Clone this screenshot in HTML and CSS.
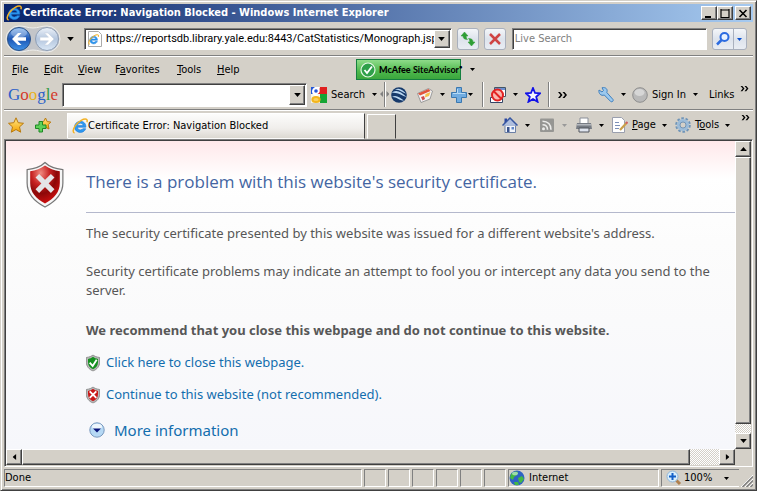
FILE: index.html
```html
<!DOCTYPE html>
<html lang="en">
<head>
  <meta charset="UTF-8">
  <meta name="viewport" content="width=device-width, initial-scale=1.0">
  <title>Certificate Error: Navigation Blocked</title>
  <link rel="stylesheet" href="styles.css">
</head>
<body>
  <!-- shared icons -->
  <svg class="defs" aria-hidden="true">
    <defs>
      <linearGradient id="gBlue" x1="0" y1="0" x2="0" y2="1">
        <stop offset="0" stop-color="#7fb2ee"/><stop offset=".5" stop-color="#1d56b4"/><stop offset="1" stop-color="#3f93e8"/>
      </linearGradient>
      <linearGradient id="gPale" x1="0" y1="0" x2="0" y2="1">
        <stop offset="0" stop-color="#eef3fa"/><stop offset=".5" stop-color="#b4c6de"/><stop offset="1" stop-color="#dbe8f6"/>
      </linearGradient>
      <radialGradient id="gRed" cx=".35" cy=".2" r=".9">
        <stop offset="0" stop-color="#f08a80"/><stop offset=".35" stop-color="#c62020"/><stop offset=".6" stop-color="#8c0808"/><stop offset="1" stop-color="#e01010"/>
      </radialGradient>
      <linearGradient id="gStar" x1="0" y1="0" x2="0" y2="1">
        <stop offset="0" stop-color="#ffe88a"/><stop offset="1" stop-color="#f5a300"/>
      </linearGradient>
      <symbol id="ie" viewBox="0 0 16 16">
        <path d="M13.8 9.2H5.4c.2 1.800 1.400 2.700 3 2.700 1.200 0 2-.4 2.600-1.200h2.700c-.8 2.300-2.700 3.700-5.300 3.700-3.400 0-5.800-2.300-5.800-5.500s2.500-5.600 5.800-5.600c3.500 0 5.700 2.500 5.400 5.900zM5.500 7.400h5.600C10.900 6 9.900 5.200 8.400 5.200S5.800 6 5.500 7.400z" fill="#2f9af0" stroke="#1574d6" stroke-width=".6"/>
        <path d="M2.600 15C.6 14.600.6 11.400 3.400 7.600 6.600 3.200 12 .2 14.400 1.300c1 .5 1 1.600.5 2.900" fill="none" stroke="#f3b226" stroke-width="1.500"/>
      </symbol>
      <symbol id="down" viewBox="0 0 5 3"><path d="M0 0h5L2.500 3z" fill="currentColor"/></symbol>
      <symbol id="shield" viewBox="0 0 38 46">
        <path d="M19 1c3 3 9 6 18 7v13c0 11-7 19-18 24C8 40 1 32 1 21V8C10 7 16 4 19 1z" fill="#b9b9b9" stroke="#777" stroke-width="2"/>
        <path d="M19 6c4 3 8 5 13.500 6v9c0 9-5 15-13.500 19C10.500 36 5.500 30 5.500 21V12C11 11 15 9 19 6z" fill="currentColor"/>
      </symbol>
      <symbol id="more" viewBox="0 0 9 8"><path d="M0 1h2l2.500 3L2 7H0l2.500-3zM4.500 1h2L9 4 6.500 7h-2L7 4z" fill="currentColor"/></symbol>
    </defs>
  </svg>

  <div class="window">
    <header class="titlebar">
      <svg class="icon"><use href="#ie"/></svg>
      <h1>Certificate Error: Navigation Blocked - Windows Internet Explorer</h1>
      <button type="button" class="caption" aria-label="Minimize"><svg width="10" height="9"><path d="M1 8h6" stroke="#000" stroke-width="2"/></svg></button>
      <button type="button" class="caption" aria-label="Maximize"><svg width="10" height="9"><path d="M.5 1h9M1 0v9M9 0v9M.5 8.500h9" stroke="#000" stroke-width="1.200" fill="none"/></svg></button>
      <button type="button" class="caption close" aria-label="Close"><svg width="10" height="9"><path d="M1.500 1l7 7M8.500 1l-7 7" stroke="#000" stroke-width="1.600"/></svg></button>
    </header>

    <nav class="navbar">
      <button type="button" class="travel" aria-label="Back and forward">
        <svg width="56" height="28">
          <path d="M14 1c6 0 9 2 14 2s8-2 14-2a13 13 0 0 1 0 26c-6 0-9-2-14-2s-8 2-14 2a13 13 0 0 1 0-26z" fill="#c3c5c9" stroke="#eeeeec"/>
          <circle cx="14" cy="14" r="11.500" fill="url(#gBlue)" stroke="#2b5288"/>
          <ellipse cx="14" cy="8" rx="8" ry="4.500" fill="#fff" opacity=".3"/>
          <path d="M7 14l6-6h3.500l-4 4.200H21v3.600h-8.500l4 4.200H13z" fill="#fff"/>
          <circle cx="42" cy="14" r="11.500" fill="url(#gPale)" stroke="#8d9db4"/>
          <path d="M49 14l-6-6h-3.500l4 4.200H35v3.600h8.500l-4 4.200H43z" fill="#fff" stroke="#c5cfdd" stroke-width=".5"/>
        </svg>
      </button>
      <button type="button" class="flat history" aria-label="Recent pages"><svg class="arrow big"><use href="#down"/></svg></button>
      <div class="field address">
        <svg class="icon" viewBox="0 0 16 16"><path d="M1.500.5h10l3 3v12h-13z" fill="#fff" stroke="#aaa"/><use href="#ie" x="1" y="3" width="11" height="11"/></svg>
        <input type="text" aria-label="Address" value="https://reportsdb.library.yale.edu:8443/CatStatistics/Monograph.jsp">
        <button type="button" class="drop" aria-label="Show addresses"><svg class="arrow big"><use href="#down"/></svg></button>
      </div>
      <button type="button" class="glass" aria-label="Refresh">
        <svg class="icon" viewBox="0 0 16 16"><path d="M1 5l3.500-4L8 5H6.200c0 1.500.3 2.500 1.300 3.500C4.500 8.500 3 7.500 3 5zM15 11l-3.500 4L8 11h1.800c0-1.500-.3-2.500-1.300-3.500 3 0 4.500 1 4.500 3.500z" fill="#2f9e35" stroke="#2f9e35" stroke-width=".5"/></svg>
      </button>
      <button type="button" class="glass" aria-label="Stop">
        <svg class="icon" viewBox="0 0 16 16"><path d="M3 3l10 10M13 3L3 13" stroke="#cf4444" stroke-width="2.500"/></svg>
      </button>
      <div class="field live"><input type="search" aria-label="Live Search" placeholder="Live Search"></div>
      <div class="glass split">
        <button type="button" aria-label="Search"><svg class="icon" viewBox="0 0 16 16"><circle cx="9.500" cy="6" r="4" fill="#e8f2ff" stroke="#2b6be0" stroke-width="2"/><path d="M6.500 9L2 13.500" stroke="#2b6be0" stroke-width="2.500"/></svg></button>
        <button type="button" aria-label="Search options"><svg class="arrow blue"><use href="#down"/></svg></button>
      </div>
    </nav>

    <div class="menubar">
      <nav class="menu">
        <a href="#"><u>F</u>ile</a>
        <a href="#"><u>E</u>dit</a>
        <a href="#"><u>V</u>iew</a>
        <a href="#">F<u>a</u>vorites</a>
        <a href="#"><u>T</u>ools</a>
        <a href="#"><u>H</u>elp</a>
      </nav>
      <button type="button" class="advisor">
        <svg class="icon" viewBox="0 0 16 16"><circle cx="8" cy="8" r="7" fill="#2fa04a" stroke="#e6f7e6" stroke-width="1.200"/><path d="M4.500 8l2.500 3 5-6.500" fill="none" stroke="#fff" stroke-width="1.800"/></svg>
        <span><b>McAfee</b> SiteAdvisor<sup>•</sup></span>
      </button>
      <button type="button" class="flat" aria-label="SiteAdvisor menu"><svg class="arrow"><use href="#down"/></svg></button>
    </div>

    <div class="googlebar">
      <div class="logo" aria-label="Google"><span class="g-blue">G</span><span class="g-red">o</span><span class="g-yellow">o</span><span class="g-blue">g</span><span class="g-green">l</span><span class="g-red">e</span></div>
      <div class="field combo">
        <input type="text" aria-label="Google search">
        <button type="button" class="drop" aria-label="Search history"><svg class="arrow big"><use href="#down"/></svg></button>
      </div>
      <button type="button" class="tool">
        <svg class="icon" viewBox="0 0 16 16"><path d="M0 0h7v7H0z" fill="#2355d8"/><path d="M7 0h9v7H7z" fill="#e02020"/><path d="M9 7h7v9H9z" fill="#15a535"/><path d="M0 7h9v9H0z" fill="#f5f5e8"/><path d="M4 0h5L8.500 2c1 3-1 5-3 5.500l3.500 2.500-5-1C0 7 0 2 4 0z" fill="#fff"/><circle cx="5" cy="4" r="1.800" fill="#2355d8"/><ellipse cx="5" cy="12.500" rx="3.600" ry="2.500" fill="#f8d060" stroke="#f3b51b" stroke-width="2"/></svg>
        Search<svg class="arrow"><use href="#down"/></svg>
      </button>
      <svg class="grip" viewBox="0 0 9 25"><path d="M4.500 0v25" stroke="#808080"/><path d="M5.500 0v25" stroke="#fff"/><path d="M3 9v6L0 12zM6.500 9v6l3-3z" fill="#808080"/></svg>
      <button type="button" class="tool" aria-label="Earth">
        <svg class="icon" viewBox="0 0 16 16"><circle cx="8" cy="8" r="7.800" fill="#173a6b"/><path d="M.5 6c4-4 9-2 15 4-4-1-9-5-15-4zM1 10c4-3 8 1 12 3.500-5 0-8-4-12-3.500zM4 2.500c5-2 8 1 11 4-4-1-6-4-11-4z" fill="#bcd9f2"/></svg>
      </button>
      <button type="button" class="tool" aria-label="News">
        <svg class="icon" viewBox="0 0 16 16"><path d="M.5 6.500l11-5L15.500 4l-2.500 8-9 3.500z" fill="#f4f5f8" stroke="#8a8a8a" stroke-width=".8"/><path d="M1 6.500l10.500-4.500 2 2L3 8.500z" fill="#e2533c"/><path d="M8.500 7l5-2-1.500 4-4 1.500z" fill="#f6c04e"/><path d="M4 10l3-1 1 3-2.500 1.500z" fill="#d04a4a"/></svg>
        <svg class="arrow"><use href="#down"/></svg>
      </button>
      <button type="button" class="tool tight" aria-label="Add">
        <svg class="icon" viewBox="0 0 16 16"><path d="M5.500.5h5v5h5v5h-5v5h-5v-5h-5v-5h5z" fill="#71ace0" stroke="#3b78b0"/><path d="M6.500 2v4.500H2M7 6.500h7" fill="none" stroke="#b7dbf6"/></svg>
        <svg class="arrow"><use href="#down"/></svg>
      </button>
      <i class="divider"></i>
      <button type="button" class="tool" aria-label="Pop-up blocker">
        <svg class="icon" viewBox="0 0 16 16"><path d="M4.500.5h11v9h-11z" fill="#fff" stroke="#456"/><path d="M5 1h10v2H5z" fill="#6d8fd0"/><path d="M.5 10.500h12v5H.5z" fill="#fff" stroke="#346"/><circle cx="7.500" cy="8" r="5.500" fill="#f8b8b0" stroke="#e32222" stroke-width="2"/><path d="M4 4.500l7 7" stroke="#e32222" stroke-width="2"/></svg>
        <svg class="arrow"><use href="#down"/></svg>
      </button>
      <button type="button" class="tool" aria-label="Bookmark">
        <svg class="icon" viewBox="0 0 16 16"><path d="M8 1l2 5 5.200.3-4 3.400 1.400 5.100L8 12l-4.600 2.800 1.400-5.100-4-3.400L6 6z" fill="#f5f5ff" stroke="#1212e8" stroke-width="1.800"/></svg>
      </button>
      <i class="divider"></i>
      <button type="button" class="flat" aria-label="More Google tools"><svg class="chevron"><use href="#more"/></svg></button>
      <span></span>
      <button type="button" class="tool" aria-label="Google settings">
        <svg class="icon" viewBox="0 0 16 16"><path d="M1 3l3 2 1.500-1.500L4 .8C8-.2 10 2.500 8.800 5.500l6.200 7c.8 1.500-1 3-2.300 2L6.300 8C3 9.300.3 6.500 1 3z" fill="#9cc9ee" stroke="#3f7fbd"/></svg>
        <svg class="arrow"><use href="#down"/></svg>
      </button>
      <button type="button" class="tool">
        <svg class="icon" viewBox="0 0 16 16"><circle cx="8" cy="8" r="7.300" fill="#b9b9b9" stroke="#8e8e8e"/><ellipse cx="7.500" cy="5.500" rx="5" ry="3.500" fill="#d6d6d6"/></svg>
        Sign In<svg class="arrow"><use href="#down"/></svg>
      </button>
      <button type="button" class="tool links">Links</button>
      <button type="button" class="flat top" aria-label="More links"><svg class="chevron small"><use href="#more"/></svg></button>
    </div>

    <div class="tabbar">
      <button type="button" class="tool" aria-label="Favorites">
        <svg class="icon" viewBox="0 0 16 16"><path d="M8 .8l2.200 4.900 5.300.6-4 3.600 1.200 5.300L8 12.500l-4.700 2.700 1.200-5.300-4-3.600 5.300-.6z" fill="url(#gStar)" stroke="#b97a10"/></svg>
      </button>
      <button type="button" class="tool" aria-label="Add to favorites">
        <svg class="icon" viewBox="0 0 16 16"><path d="M10.500 1l1.700 3.600 3.600.4-2.600 2.700.8 4.300-3.500-1.800L7 12l.5-4-2.700-3 3.800-.4z" fill="url(#gStar)" stroke="#b97a10"/><path d="M4 4.500h3.500V8H11v3.500H7.500V15H4v-3.500H.5V8H4z" fill="#5fd05a" stroke="#1d8a25"/></svg>
      </button>
      <a href="#" class="tab"><svg class="icon"><use href="#ie"/></svg>Certificate Error: Navigation Blocked</a>
      <button type="button" class="newtab" aria-label="New tab"></button>
      <span></span>
      <button type="button" class="tool" aria-label="Home">
        <svg class="icon" viewBox="0 0 16 16"><path d="M3 8h10.500v7.500H3z" fill="#f1f4fa" stroke="#6b7fa5"/><path d="M2.500 1.500h2.500v5H2.500z" fill="#2a45a0"/><path d="M.5 8.500L8 1l7.500 7.500" fill="#aebede" stroke="#3656a0" stroke-width="1.500"/><path d="M5 10h2.500v5H5z" fill="#39538d"/><path d="M9.500 10h2.500v2.500H9.500z" fill="#5f86c8"/></svg>
        <svg class="arrow"><use href="#down"/></svg>
      </button>
      <button type="button" class="tool muted" aria-label="Feeds">
        <svg class="icon" viewBox="0 0 16 16"><rect x="1" y="1.500" width="14" height="13.500" rx="1" fill="#969693"/><circle cx="4.500" cy="11.800" r="1.500" fill="#ececea"/><path d="M3.500 7.800c3 0 5 2 5 5M3.500 4.300c5.500 0 8.500 3.500 8.500 8.500" fill="none" stroke="#ececea" stroke-width="1.600"/></svg>
        <svg class="arrow"><use href="#down"/></svg>
      </button>
      <button type="button" class="tool" aria-label="Print">
        <svg class="icon" viewBox="0 0 16 16"><path d="M4 1h8v6H4z" fill="#fff" stroke="#8a8f99"/><path d="M1 6h14l1 6H0z" fill="#777c84"/><path d="M1 7h14v1.500H1z" fill="#b2b6bc"/><path d="M3 11h10v4H3z" fill="#dfe4ee" stroke="#50545c"/></svg>
        <svg class="arrow"><use href="#down"/></svg>
      </button>
      <button type="button" class="tool">
        <svg class="icon" viewBox="0 0 16 16"><path d="M.5.5h9l3 3v12H.5z" fill="#fff" stroke="#9a9fae"/><path d="M3 5.500h4M3 8.500h5M3 11.500h4" stroke="#7b8fb7"/><path d="M14.500 6L8 13" stroke="#caa04a" stroke-width="2.200"/><path d="M15.500 5l-1.500 1.500" stroke="#d25d5d" stroke-width="2.200"/></svg>
        <span><u>P</u>age</span><svg class="arrow"><use href="#down"/></svg>
      </button>
      <button type="button" class="tool">
        <svg class="icon" viewBox="0 0 16 16"><circle cx="8" cy="8" r="6.800" fill="none" stroke="#6f94b8" stroke-width="2" stroke-dasharray="2.600 1.700"/><circle cx="8" cy="8" r="4.500" fill="#d4d0c8" stroke="#9cbcd9" stroke-width="3"/><circle cx="8" cy="8" r="3" fill="none" stroke="#6489ad" stroke-width=".8"/></svg>
        <span>T<u>o</u>ols</span><svg class="arrow"><use href="#down"/></svg>
      </button>
      <button type="button" class="flat top" aria-label="More commands"><svg class="chevron small"><use href="#more"/></svg></button>
    </div>

    <div class="viewport">
      <main class="page">
        <svg class="badge" viewBox="0 0 38 46">
          <path d="M19 1.500c3 3 9 6 17.500 7v13c0 11-7 18-17.500 23.500C8.500 39.500 1.500 32.500 1.500 21.500v-13C10 7.500 16 4.500 19 1.500z" fill="#f6f6f6" stroke="#777" stroke-width="1.200"/>
          <path d="M19 4.500c4 3 9 5 14.500 5.500v11.500c0 9-5.500 15-14.500 20-9-5-14.500-11-14.500-20V10C10 9.500 15 7.500 19 4.500z" fill="url(#gRed)"/>
          <path d="M11.500 14.500l15 15M26.500 14.500l-15 15" stroke="#e4e4e6" stroke-width="5"/>
        </svg>
        <article>
          <h2>There is a problem with this website's security certificate.</h2>
          <p>The security certificate presented by this website was issued for a different website's address.</p>
          <p>Security certificate problems may indicate an attempt to fool you or intercept any data you send to the server.</p>
          <p class="advice"><b>We recommend that you close this webpage and do not continue to this website.</b></p>
          <ul>
            <li>
              <svg class="mini ok" viewBox="0 0 38 46"><use href="#shield"/><path d="M10 22l8 9 11-17" fill="none" stroke="#fff" stroke-width="5"/></svg>
              <a href="#">Click here to close this webpage.</a>
            </li>
            <li>
              <svg class="mini bad" viewBox="0 0 38 46"><use href="#shield"/><path d="M10 13l18 18M28 13L10 31" stroke="#fff" stroke-width="5"/></svg>
              <a href="#">Continue to this website (not recommended).</a>
            </li>
            <li class="info">
              <svg class="icon" viewBox="0 0 16 16"><circle cx="8" cy="8" r="7.200" fill="#b5d8f4" stroke="#7797bd"/><ellipse cx="8" cy="4.500" rx="5" ry="2.800" fill="#eef7fd"/><path d="M4 6.500h8L8 10.500z" fill="#08147a"/></svg>
              <a href="#">More information</a>
            </li>
          </ul>
        </article>
      </main>
      <div class="scroll vertical">
        <button type="button" aria-label="Scroll up"><svg class="arrow big up"><use href="#down"/></svg></button>
        <i class="thumb"></i>
        <button type="button" aria-label="Scroll down"><svg class="arrow big"><use href="#down"/></svg></button>
      </div>
      <div class="scroll horizontal">
        <button type="button" aria-label="Scroll left"><svg class="arrow big left"><use href="#down"/></svg></button>
        <i class="thumb"></i>
        <button type="button" aria-label="Scroll right"><svg class="arrow big right"><use href="#down"/></svg></button>
      </div>
    </div>

    <footer class="status">
      <span>Done</span>
      <span></span><span></span><span></span><span></span><span></span><span></span>
      <span class="zone">
        <svg class="icon" viewBox="0 0 16 16"><circle cx="8" cy="8" r="7.500" fill="#2e62c4"/><path d="M2 4c3-3 6-3 7-2L8 5 5 7 4 10 1 8zM9 8l4-2 2 3-3 4-2-1zM5 12l4 0 1 3-4 0z" fill="#44b944"/><ellipse cx="6" cy="3.500" rx="3" ry="1.800" fill="#c5ecd6" opacity=".7"/></svg>
        Internet
      </span>
      <button type="button" class="zoom">
        <svg class="icon" viewBox="0 0 16 16"><path d="M9.500 9.500l4.500 4.500" stroke="#b0804f" stroke-width="3"/><circle cx="6.500" cy="6.500" r="5.500" fill="#d9eefc" stroke="#8fb5d8"/><path d="M6.500 3v7M3 6.500h7" stroke="#1560c8" stroke-width="2"/></svg>
        100%<svg class="arrow"><use href="#down"/></svg>
      </button>
      <svg class="resize" viewBox="0 0 12 12"><path d="M0 12L12 0M4 12l8-8M8 12l4-4" stroke="#fff"/><path d="M1.500 12L12 1.500M5.500 12L12 5.500M9.500 12L12 9.500" stroke="#808080" stroke-width="1.500"/></svg>
    </footer>
  </div>
</body>
</html>
```
FILE: styles.css
```css
* {
  box-sizing: border-box;
}
body {
  margin: 0;
  background: #d4d0c8;
  color: #000;
  font: 11px/14px "DejaVu Sans Condensed", Tahoma, sans-serif;
}
button, input {
  font: inherit;
  color: inherit;
  margin: 0;
  padding: 0;
  border: 0;
  background: none;
  min-width: 0;
}
input {
  width: 100%;
  outline: 0;
}
button {
  display: flex;
  align-items: center;
  white-space: nowrap;
}
a {
  color: inherit;
  text-decoration: none;
}
svg {
  display: block;
  flex: none;
}
.defs {
  position: absolute;
  width: 0;
  height: 0;
}
.icon {
  width: 16px;
  height: 16px;
}
.arrow {
  width: 5px;
  height: 3px;
}
.arrow.big {
  width: 7px;
  height: 4px;
}
.arrow.blue {
  color: #0a50d0;
}
.arrow.up {
  transform: rotate(180deg);
}
.arrow.left {
  transform: rotate(90deg);
}
.arrow.right {
  transform: rotate(-90deg);
}
.chevron {
  width: 11px;
  height: 8px;
}
.chevron.small {
  width: 9px;
  height: 7px;
}
.flat {
  justify-content: center;
}

/* window frame */
.window {
  display: flex;
  flex-direction: column;
  min-height: 100vh;
  padding: 3px;
  border: 1px solid;
  border-color: #d4d0c8 #404040 #404040 #d4d0c8;
  box-shadow: inset 1px 1px #fff, inset -1px -1px #808080;
}
.titlebar {
  display: flex;
  align-items: center;
  height: 18px;
  padding: 0 2px;
  background: linear-gradient(to right, #0a246a, #a6caf0);
  color: #fff;
}
.titlebar h1 {
  flex: 1;
  margin: 0 0 0 1px;
  font-size: 11px;
  white-space: nowrap;
}
.caption, .drop, .scroll button, .thumb {
  background: #d4d0c8;
  border: 1px solid;
  border-color: #fff #404040 #404040 #fff;
  box-shadow: inset -1px -1px #808080;
}
.caption {
  width: 16px;
  height: 14px;
  justify-content: center;
}
.caption.close {
  margin-left: 2px;
}

/* address row */
.navbar {
  display: flex;
  align-items: center;
  height: 35px;
  padding: 0 6px 0 1px;
  border-bottom: 1px solid #fff;
  box-shadow: inset 0 -1px #808080;
}
.history {
  width: 16px;
  margin: 0 6px 0 1px;
}
.field {
  display: flex;
  align-items: center;
  height: 22px;
  padding: 1px;
  background: #fff;
  border: 1px solid;
  border-color: #808080 #fff #fff #808080;
  box-shadow: inset 1px 1px #404040;
}
.address {
  flex: 370;
  padding-left: 2px;
}
.address input {
  margin-left: 3px;
  font-family: Roboto, sans-serif;
}
.drop {
  flex: none;
  width: 16px;
  height: 18px;
  justify-content: center;
}
.glass {
  width: 22px;
  height: 22px;
  margin-left: 5px;
  justify-content: center;
  background: linear-gradient(#f4f6f9, #dde3ec 50%, #e9edf3);
  border: 1px solid #a9b0bd;
  border-radius: 3px;
}
.live {
  flex: 194;
  margin-left: 6px;
  padding-left: 2px;
}
.live input::placeholder {
  color: #808080;
  opacity: 1;
}
.split {
  display: flex;
  width: 35px;
}
.split button {
  width: 21px;
  height: 20px;
  justify-content: center;
}
.split button + button {
  width: 14px;
  border-left: 1px solid #a9b0bd;
}

/* menu row */
.menubar {
  display: flex;
  align-items: center;
  height: 25px;
}
.menu {
  display: grid;
  grid-template-columns: 32px 34px 37px 62px 40px 139px;
  padding-left: 8px;
}
.advisor {
  width: 105px;
  height: 21px;
  gap: 3px;
  padding-left: 3px;
  background: linear-gradient(#8fdc8a, #4db84c 60%, #3ba63d);
  border: 1px solid #158040;
  font: 9px/14px Lato, sans-serif;
}
.advisor span {
  font-weight: 700;
}
.advisor b {
  font-weight: 900;
}
.advisor sup {
  font-size: 6px;
  line-height: 6px;
}
.menubar .flat {
  width: 22px;
}

/* google toolbar */
.googlebar, .tabbar {
  display: grid;
  align-items: center;
}
.googlebar {
  grid-template-columns: 58px 245px 73px 7px 26px 34px 32px 7px 35px 24px 7px 20px 1fr 34px 74px 34px 17px;
  height: 29px;
  padding-bottom: 3px;
  border-bottom: 1px solid #fff;
  box-shadow: inset 0 -1px #808080;
}
.logo {
  padding-left: 4px;
  font: 17px/22px "Liberation Serif", serif;
}
.g-blue { color: #2c5fc9; }
.g-red { color: #d33a2c; }
.g-yellow { color: #e8b020; }
.g-green { color: #2f9a45; }
.combo {
  height: 24px;
}
.combo .drop {
  height: 20px;
}
.tool {
  gap: 4px;
  padding-left: 4px;
}
.tool .icon + .arrow {
  margin-left: 3px;
}
.tool.tight .icon + .arrow {
  margin-left: -3px;
}
.tool .arrow {
  margin-left: 2px;
}
.muted .arrow {
  color: #999;
}
.links {
  padding-left: 7px;
}
.divider {
  width: 2px;
  height: 25px;
  margin-left: 3px;
  border-left: 1px solid #808080;
  border-right: 1px solid #fff;
}
.grip {
  width: 9px;
  height: 25px;
}
.top {
  align-self: start;
  height: 12px;
}

/* tabs and command bar */
.tabbar {
  grid-template-columns: 27px 36px 298px 31px 1fr 37px 37px 36px 63px 66px 16px;
  height: 28px;
}
.tab {
  display: flex;
  align-items: center;
  align-self: end;
  height: 26px;
  padding-left: 4px;
  background: linear-gradient(#fcfcfb, #f0eeeb 60%, #dcd9d2);
  border: 1px solid;
  border-color: #fff #404040 transparent #fff;
  white-space: nowrap;
}
.newtab {
  align-self: end;
  height: 25px;
  margin-left: 2px;
  border: 1px solid;
  border-color: #fff #404040 transparent #fff;
}

/* browser content */
.viewport {
  flex: 1;
  display: grid;
  grid-template-columns: 1fr 16px;
  grid-template-rows: 1fr 16px;
  background: #d4d0c8;
  border: 1px solid;
  border-color: #808080 #fff #fff #808080;
  box-shadow: inset 1px 1px #404040;
  padding: 1px;
}
.page {
  display: flex;
  padding: 20px 0 7px 19px;
  background: linear-gradient(#ffe8ea, #fff 38px, #fcfcfc 100px, #fafafb 180px, #f6f7fb);
  color: #575757;
  font: 13px/19px "Noto Sans", "Segoe UI", sans-serif;
}
.badge {
  width: 40px;
  height: 47px;
}
article {
  flex: 1;
  margin-left: 21px;
}
h2 {
  margin: 0 0 11px;
  padding: 8px 0 17px;
  border-bottom: 1px solid #b4b8cc;
  color: #4465a2;
  font-family: "Open Sans", sans-serif;
  font-size: 17px;
  font-weight: 400;
  line-height: 26px;
}
p {
  margin: 0 18px 19px 0;
}
.advice {
  margin: 21px 0 13px;
}
ul {
  margin: 0;
  padding: 0;
  list-style: none;
}
li {
  display: flex;
  align-items: center;
  gap: 6px;
  margin-bottom: 13px;
  color: #136eae;
}
.mini {
  width: 14px;
  height: 18px;
}
.ok {
  color: #159020;
}
.bad {
  color: #c81818;
}
.info {
  gap: 9px;
  margin: 15px 0 0 3px;
  font-size: 15px;
  line-height: 22px;
}

/* scrollbars */
.scroll {
  display: flex;
  background: repeating-conic-gradient(#fff 0 25%, #d4d0c8 0 50%) 0 0 / 2px 2px;
}
.scroll button {
  flex: none;
  width: 16px;
  height: 16px;
  justify-content: center;
}
.thumb {
  flex: 1;
}
.vertical {
  flex-direction: column;
}
.vertical .thumb {
  margin-bottom: 9px;
}
.horizontal .thumb {
  margin-right: 29px;
}

/* status bar */
.status {
  display: grid;
  grid-template-columns: 1fr repeat(6, 22px) 151px 78px 12px;
  column-gap: 2px;
  height: 20px;
  padding-top: 2px;
}
.status > span, .zoom {
  display: flex;
  align-items: center;
  border: 1px solid;
  border-color: #808080 #fff #fff #808080;
}
.zone {
  gap: 4px;
}
.zoom {
  gap: 2px;
  padding-left: 4px;
  border-right: 0;
}
.zoom .arrow {
  margin-left: 10px;
}
.resize {
  width: 12px;
  height: 12px;
  align-self: end;
}
```
